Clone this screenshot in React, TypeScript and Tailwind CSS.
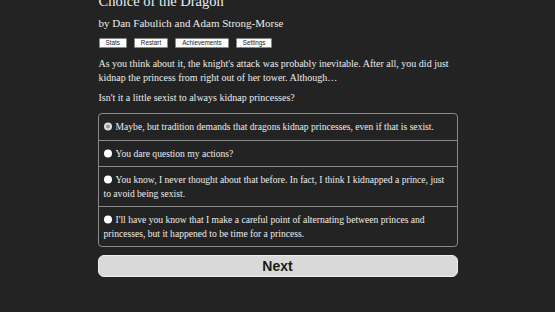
import React from "react";

const serif = { fontFamily: '"Liberation Serif", "DejaVu Serif", serif' };

const choices = [
  "Maybe, but tradition demands that dragons kidnap princesses, even if that is sexist.",
  "You dare question my actions?",
  "You know, I never thought about that before. In fact, I think I kidnapped a prince, just to avoid being sexist.",
  "I'll have you know that I make a careful point of alternating between princes and princesses, but it happened to be time for a princess.",
];

function MenuButton({ label }: { label: string }) {
  return (
    <button className="h-[10px] rounded-[1px] border border-[#888] bg-white px-[6px] font-['Liberation_Sans',sans-serif] text-[6.3px] leading-[8px] text-[#222]">
      {label}
    </button>
  );
}

export default function App() {
  return (
    <div className="h-[312px] w-[555px] overflow-hidden bg-[#232323] text-[#ececec]" style={serif}>
      <div className="mx-auto w-[360px]">
        <h1 className="-mt-[7px] pl-px text-[14.5px] leading-[17px]">Choice of the Dragon</h1>
        <div className="mt-[7px] pl-px text-[11px] leading-[13px]">by Dan Fabulich and Adam Strong-Morse</div>
        <div className="mt-[8px] flex gap-[7px] pl-px">
          <MenuButton label="Stats" />
          <MenuButton label="Restart" />
          <MenuButton label="Achievements" />
          <MenuButton label="Settings" />
        </div>
        <p className="mt-[9px] pl-px text-[10px] leading-[14px]">
          As you think about it, the knight's attack was probably inevitable. After all, you did just kidnap the princess from right out of her tower. Although…
        </p>
        <p className="mt-[6px] pl-px text-[10px] leading-[14px]">Isn't it a little sexist to always kidnap princesses?</p>
        <div className="mt-[8px] overflow-hidden rounded-[4px] border border-[#8a8a8a]">
          {choices.map((c, i) => (
            <div
              key={i}
              className={`px-[5px] py-[6px] text-[9.6px] leading-[13.5px] ${i > 0 ? "border-t border-[#8a8a8a]" : ""}`}
            >
              <span
                className={`mr-[4px] inline-block h-[8px] w-[8px] translate-y-[0.5px] rounded-full ${
                  i === 0 ? "border-[2px] border-[#ddd] bg-[#999]" : "bg-white"
                }`}
              />
              {c}
            </div>
          ))}
        </div>
        <button className="mt-[8px] flex h-[22px] w-full items-center justify-center rounded-[6px] border border-[#eee] bg-[#d9d9d9] font-['Liberation_Sans',sans-serif] text-[14px] font-bold text-[#1a1a1a]">
          Next
        </button>
      </div>
    </div>
  );
}
